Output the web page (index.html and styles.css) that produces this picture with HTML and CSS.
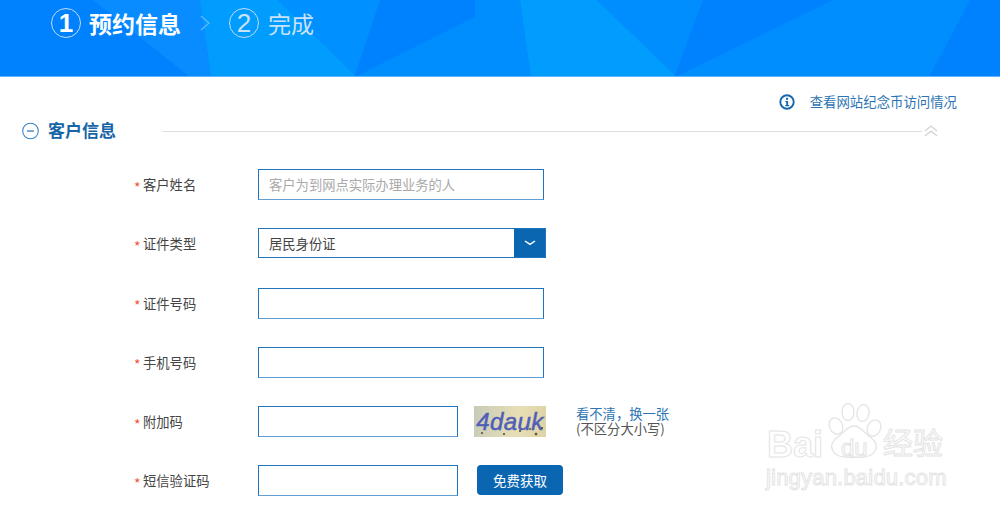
FILE: index.html
```html
<!DOCTYPE html>
<html lang="zh">
<head>
<meta charset="utf-8">
<title>预约信息</title>
<link rel="stylesheet" href="styles.css">
</head>
<body>
<header class="banner">
  <svg class="banner-bg" width="1000" height="77" viewBox="0 0 1000 77" aria-hidden="true">
    <rect width="1000" height="77" fill="#0082ff"/>
    <polygon points="93,0 200,0 211,77 190,77" fill="#088cff"/>
    <polygon points="200,0 278,0 355,75 355,77 211,77" fill="#009dff"/>
    <polygon points="278,0 380,0 355,75" fill="#0090ff"/>
    <polygon points="475,0 520,0 531,77 355,77 475,17" fill="#008eff"/>
    <polygon points="520,0 597,0 675,75 675,77 531,77" fill="#009dff"/>
    <polygon points="597,0 703,0 675,75" fill="#008eff"/>
    <polygon points="675,77 833,0 970,0 929,77" fill="#008eff"/>
  </svg>
  <div class="steps">
    <span class="step-num step-num-on">1</span>
    <span class="step-title step-title-on">预约信息</span>
    <svg class="step-arrow" width="12" height="18" viewBox="0 0 12 18" aria-hidden="true"><path d="M2 2l8 7-8 7" fill="none" stroke="#5fb6ff" stroke-width="1.4"/></svg>
    <span class="step-num">2</span>
    <span class="step-title">完成</span>
  </div>
</header>

<main class="content">
  <div class="notice">
    <svg width="16" height="16" viewBox="0 0 16 16" aria-hidden="true"><circle cx="8" cy="8" r="6.7" fill="none" stroke="#1568ae" stroke-width="1.9"/><rect x="7" y="3.8" width="2.1" height="2" fill="#1568ae"/><path d="M6.3 7h2.8v4h1v1.2H6.2V11h1V8.1h-.9z" fill="#1568ae"/></svg>
    <a class="notice-link">查看网站纪念币访问情况</a>
  </div>

  <div class="section-head">
    <svg width="17" height="18" viewBox="0 0 17 18" aria-hidden="true"><circle cx="8.5" cy="9" r="7.8" fill="none" stroke="#3c86c4" stroke-width="1.1"/><rect x="5" y="8.5" width="7" height="1.1" fill="#1565a8"/></svg>
    <h2 class="section-title">客户信息</h2>
    <span class="section-line"></span>
    <svg class="section-fold" width="14" height="12" viewBox="0 0 14 12" aria-hidden="true"><path d="M1 6l6-5 6 5M1 11l6-5 6 5" fill="none" stroke="#d2d2d2" stroke-width="1.2"/></svg>
  </div>

  <form class="form">
    <div class="row">
      <label class="label"><i class="star">*</i>客户姓名</label>
      <input class="field" type="text" placeholder="客户为到网点实际办理业务的人">
    </div>
    <div class="row">
      <label class="label"><i class="star">*</i>证件类型</label>
      <div class="select">
        <span class="select-value">居民身份证</span>
        <span class="select-btn"><svg width="12" height="6" viewBox="0 0 12 6" aria-hidden="true"><path d="M1 1l5 3.4L11 1" fill="none" stroke="#fff" stroke-width="1.5"/></svg></span>
      </div>
    </div>
    <div class="row">
      <label class="label"><i class="star">*</i>证件号码</label>
      <input class="field" type="text">
    </div>
    <div class="row">
      <label class="label"><i class="star">*</i>手机号码</label>
      <input class="field" type="text">
    </div>
    <div class="row">
      <label class="label"><i class="star">*</i>附加码</label>
      <input class="field field-short" type="text">
      <div class="captcha"><span class="captcha-text">4dauk</span></div>
      <div class="captcha-help">
        <a class="captcha-link">看不清，换一张</a>
        <span class="captcha-note">(不区分大小写)</span>
      </div>
    </div>
    <div class="row">
      <label class="label"><i class="star">*</i>短信验证码</label>
      <input class="field field-short" type="text">
      <button class="send" type="button">免费获取</button>
    </div>
  </form>
</main>

<div class="watermark">
  <svg class="wm-paw" width="56" height="60" viewBox="0 0 56 60" aria-hidden="true">
    <g fill="#fff" stroke="#e4e4e4" stroke-width="1.3">
      <ellipse cx="9" cy="24" rx="6.5" ry="8.5" transform="rotate(-25 9 24)"/>
      <ellipse cx="21" cy="10" rx="6" ry="8.5"/>
      <ellipse cx="36" cy="11" rx="6" ry="8.5" transform="rotate(10 36 11)"/>
      <ellipse cx="47" cy="26" rx="6.5" ry="8.5" transform="rotate(25 47 26)"/>
      <path d="M27 24c7 0 9 6 15 10 7 5 9 10 6 15-3 6-11 7-21 6-10 1-18 0-21-6-3-5-1-10 6-15 6-4 8-10 15-10z"/>
    </g>
  </svg>
  <span class="wm-bai">Bai</span>
  <span class="wm-du">du</span>
  <span class="wm-cn">经验</span>
  <span class="wm-url">jingyan.baidu.com</span>
</div>
</body>
</html>
```

FILE: styles.css
```css
* { box-sizing: border-box; }
html, body { margin: 0; padding: 0; }
body {
  width: 1000px;
  height: 510px;
  overflow: hidden;
  position: relative;
  background: #fff;
  color: #444;
  font-family: "Noto Sans CJK SC", "Liberation Sans", sans-serif;
  font-size: 13.3px;
}

.banner {
  position: relative;
  height: 77px;
  border-bottom: 1px solid #5fb6ff;
  overflow: hidden;
}
.banner-bg { position: absolute; left: 0; top: 0; }
.steps {
  position: relative;
  display: flex;
  align-items: center;
  height: 46px;
  padding-left: 51px;
}
.step-num {
  width: 30px;
  height: 30px;
  border: 1.5px solid #c4dcf2;
  border-radius: 50%;
  display: flex;
  align-items: center;
  justify-content: center;
  color: #c9e2f8;
  font-family: "Liberation Sans", sans-serif;
  font-size: 26px;
  line-height: 1;
}
.step-num-on { color: #fff; font-weight: 700; }
.step-title {
  margin-left: 9px;
  color: #c9e2f8;
  font-size: 23px;
  line-height: 30px;
}
.step-title-on { color: #fff; font-weight: 700; margin-right: 18px; margin-left: 8px; }
.step-arrow { margin-right: 18px; }

.content { padding: 0 43px 0 22px; }
.notice {
  display: flex;
  align-items: center;
  justify-content: flex-end;
  gap: 15px;
  height: 18px;
  margin-top: 16px;
}
.notice-link { color: #2c74b3; font-size: 13.4px; line-height: 16px; margin-bottom: 2px; }

.section-head {
  display: flex;
  align-items: center;
  height: 24px;
  margin-top: 8px;
}
.section-title {
  margin: 0 0 0 9px;
  width: 114px;
  color: #1565a8;
  font-size: 17px;
  font-weight: 700;
  line-height: 22px;
  padding-bottom: 2px;
  height: 24px;
}
.section-line { width: 760px; height: 1px; background: #dfdfdf; }
.section-fold { margin-left: 2px; }

.form { margin-top: 26.3px; padding-left: 112px; }
.row {
  display: flex;
  align-items: flex-start;
  height: 59.2px;
}
.label {
  display: flex;
  align-items: center;
  width: 124px;
  height: 31px;
  color: #444;
}
.star {
  width: 9px;
  color: #f0563c;
  font-style: normal;
  font-size: 14px;
  line-height: 1;
  padding-top: 4px;
}
.field {
  width: 286px;
  height: 31px;
  padding: 0 10px;
  border: 1px solid #1f74bb;
  border-bottom-color: #5f9dd2;
  background: #fff;
  font: inherit;
  color: #444;
  outline: none;
}
.field::placeholder { color: #aaa; opacity: 1; }
.field-short { width: 200px; }

.select {
  display: flex;
  width: 288px;
  height: 30px;
  border: 1px solid #1f74bb;
}
.select-value { flex: 1; padding-left: 10px; line-height: 30px; color: #444; }
.select-btn {
  width: 31px;
  background: #0b66b2;
  display: flex;
  align-items: center;
  justify-content: center;
}

.captcha {
  width: 72px;
  height: 31px;
  margin-left: 16px;
  display: flex;
  align-items: center;
  justify-content: center;
  background:
    radial-gradient(circle at 8px 27px, #6b6a50 0 1px, transparent 1.5px),
    radial-gradient(circle at 30px 28px, #6b6a50 0 1px, transparent 1.5px),
    radial-gradient(circle at 46px 25px, #6b6a50 0 1px, transparent 1.5px),
    radial-gradient(circle at 62px 28px, #5c5a44 0 1.2px, transparent 1.7px),
    radial-gradient(circle at 68px 22px, #5c5a44 0 1px, transparent 1.5px),
    radial-gradient(circle at 56px 23px, #7a7860 0 1px, transparent 1.5px),
    linear-gradient(100deg, #c6cbb8, #e8dfb6 60%, #dcd2a4);
}
.captcha-text {
  color: #4f5fb8;
  font-family: "Liberation Sans", sans-serif;
  font-size: 24px;
  font-style: italic;
  line-height: 1;
  letter-spacing: 0.4px;
  -webkit-text-stroke: 0.5px #4f5fb8;
}
.captcha-help {
  display: flex;
  flex-direction: column;
  margin-left: 30px;
  line-height: 15px;
  font-size: 13.3px;
}
.captcha-link { color: #2c74b3; }
.captcha-note { color: #555; }

.send {
  width: 86px;
  height: 30px;
  margin-left: 19px;
  border: 0;
  border-radius: 4px;
  background: #0b66b2;
  color: #fff;
  font: inherit;
  font-size: 13.5px;
}

.watermark {
  position: absolute;
  left: 760px;
  top: 400px;
  width: 200px;
  height: 100px;
}
.wm-paw { position: absolute; left: 67px; top: 2px; }
.wm-bai, .wm-du, .wm-cn, .wm-url {
  position: absolute;
  color: #fff;
  -webkit-text-stroke: 1px #e4e4e4;
  font-family: "Liberation Sans", sans-serif;
  line-height: 1;
}
.wm-bai { left: 7px; top: 27px; font-size: 36px; font-weight: 700; }
.wm-du { left: 81px; top: 36px; font-size: 24px; }
.wm-cn { left: 123px; top: 26px; font-size: 30px; font-family: "Noto Sans CJK SC", sans-serif; }
.wm-url { left: 6px; top: 67px; font-size: 22px; letter-spacing: 0.2px; }
```
